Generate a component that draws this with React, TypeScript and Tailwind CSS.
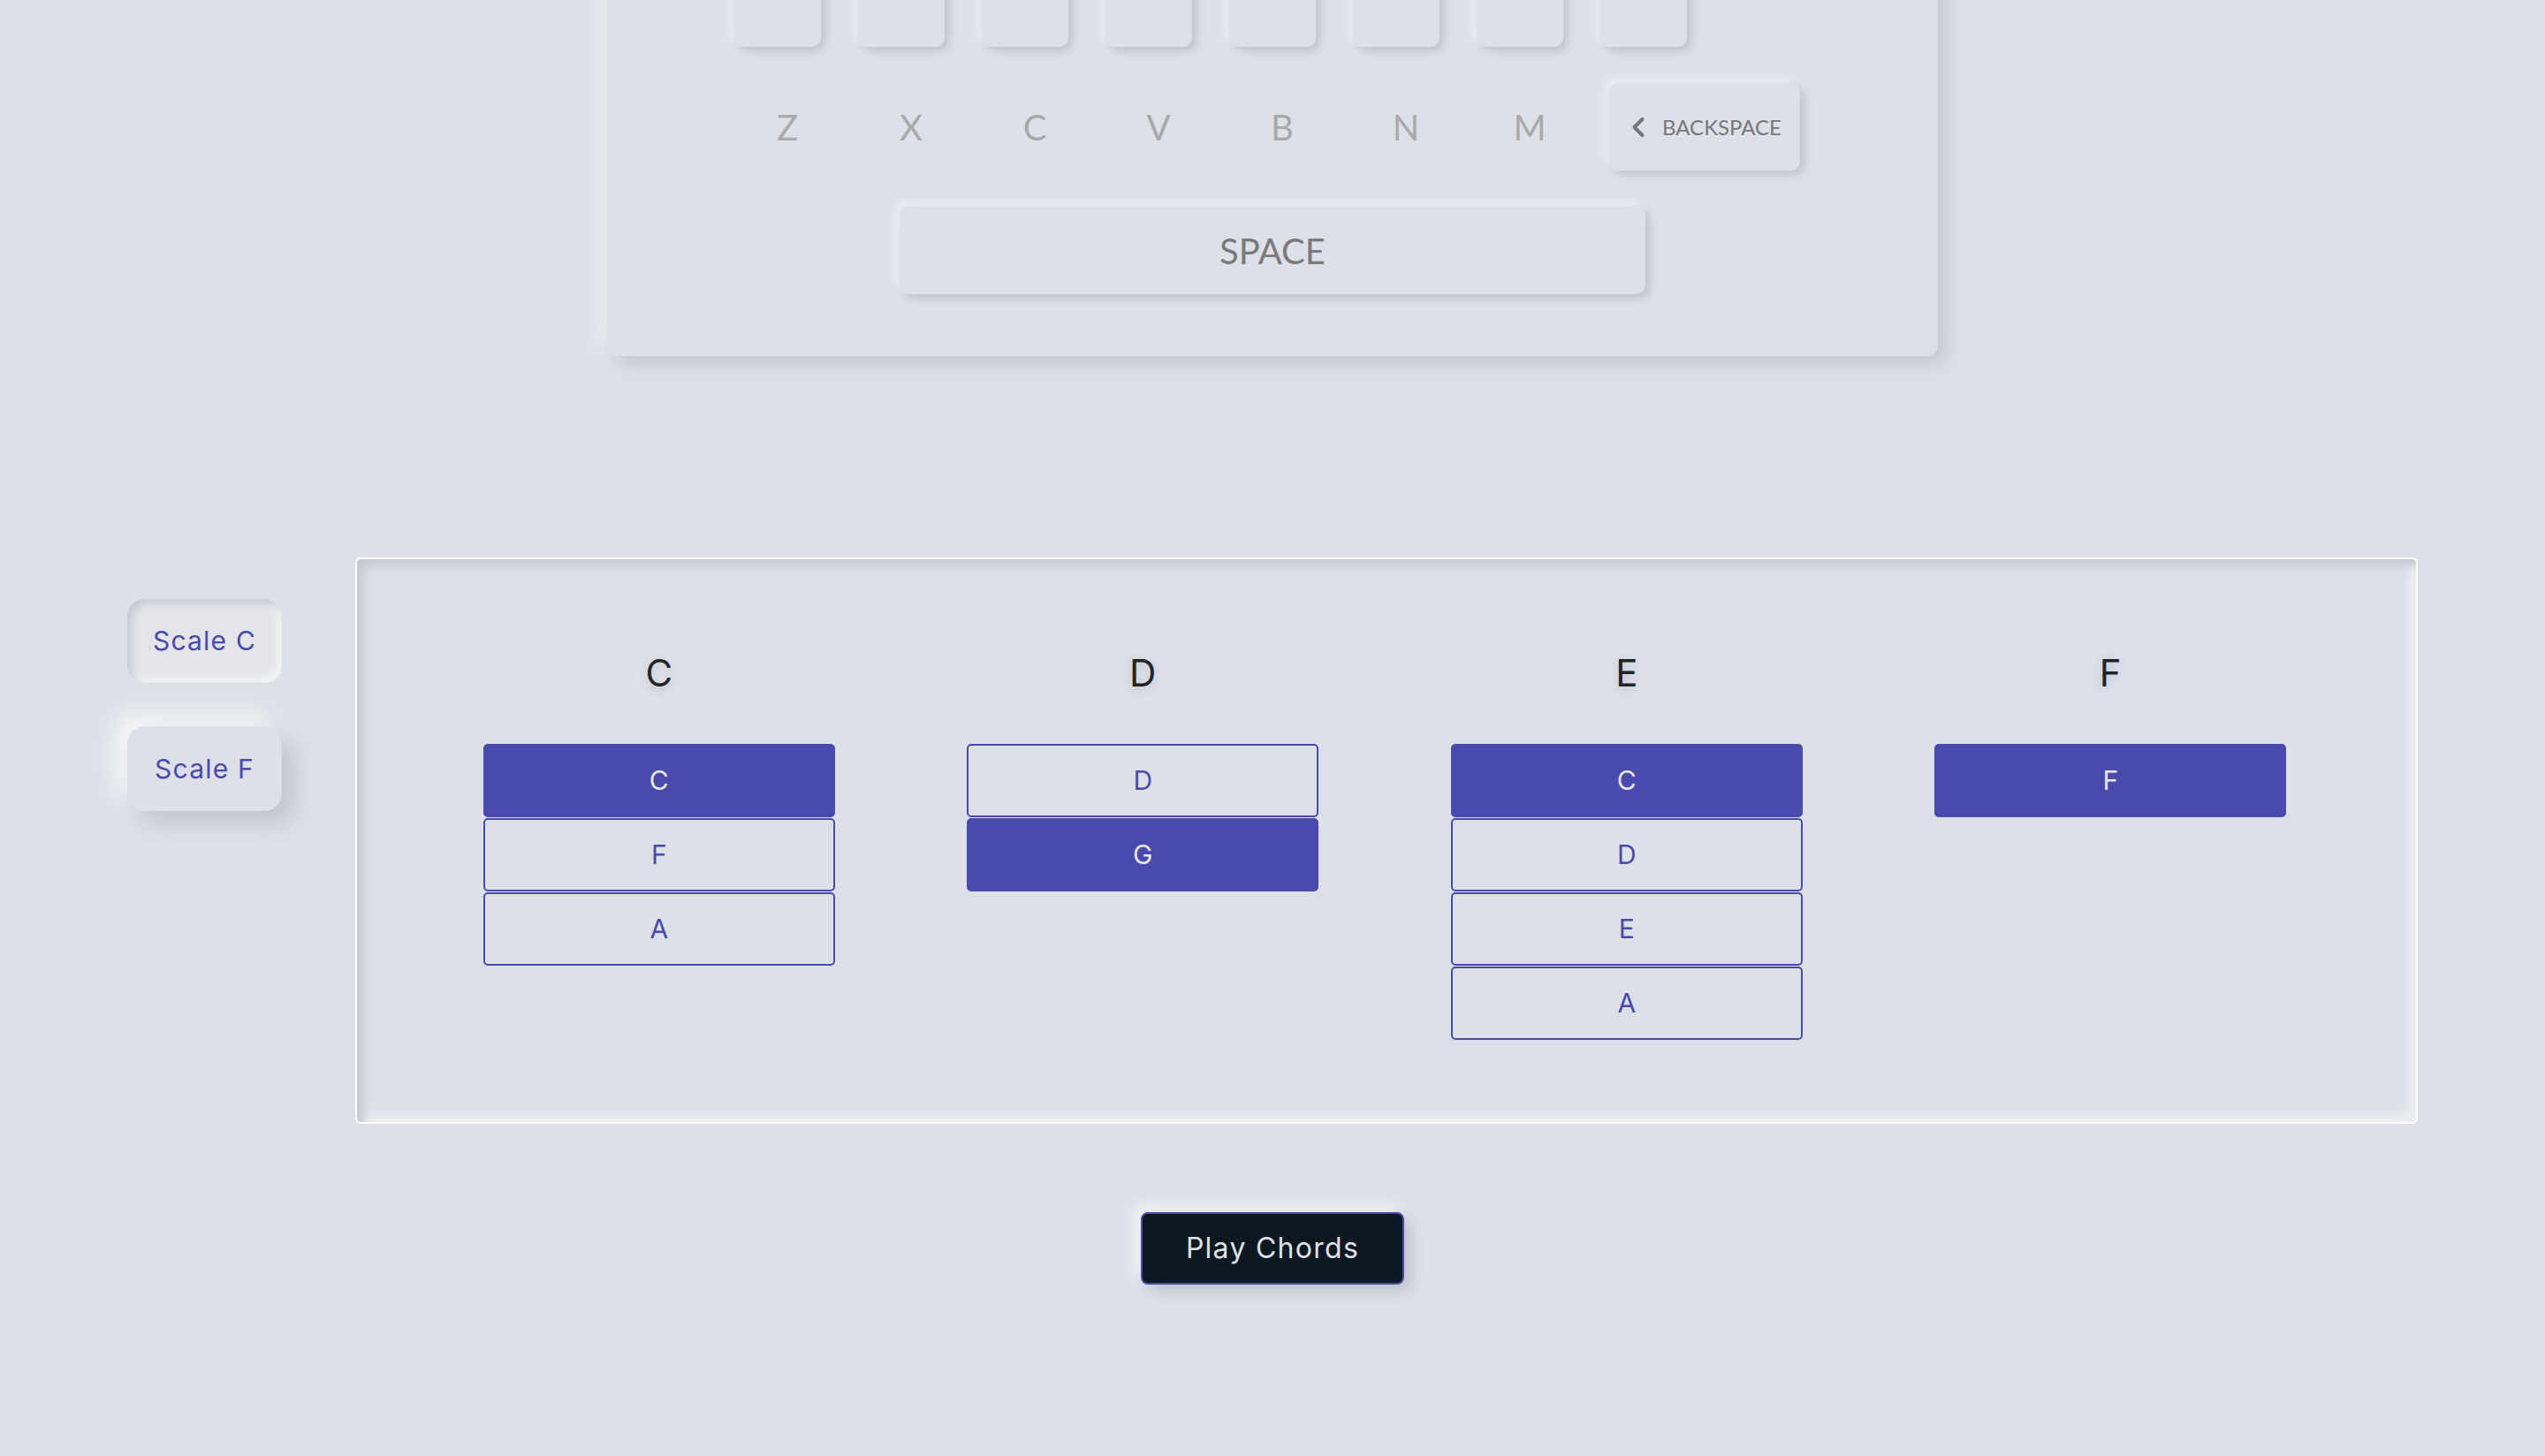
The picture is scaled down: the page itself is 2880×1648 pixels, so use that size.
import { ChevronLeft } from "lucide-react";

const topRow = ["A", "S", "D", "F", "G", "H", "J", "K"];
const bottomRow = ["Z", "X", "C", "V", "B", "N", "M"];

type Note = { n: string; on?: boolean };

const chords: { name: string; notes: Note[] }[] = [
	{ name: "C", notes: [{ n: "C", on: true }, { n: "F" }, { n: "A" }] },
	{ name: "D", notes: [{ n: "D" }, { n: "G", on: true }] },
	{ name: "E", notes: [{ n: "C", on: true }, { n: "D" }, { n: "E" }, { n: "A" }] },
	{ name: "F", notes: [{ n: "F", on: true }] },
];

const lato = "font-['Lato','Liberation_Sans',sans-serif]";
const sans = "font-['Inter','Noto_Sans',sans-serif]";

function cx(...parts: string[]) {
	return parts.join(" ");
}

function Keyboard() {
	return (
		<div className="mx-auto -mt-[46px] w-[1506px] rounded-[12px] bg-[#dde0e7] pb-[70px] shadow-[10px_10px_20px_#c3c8d2,-10px_-10px_20px_#eceef2]">
			{/* home row, mostly above the fold */}
			<div className="flex gap-[42px] pl-[144px]">
				{topRow.map((k) => (
					<div
						key={k}
						className="h-[99px] w-[98px] rounded-[10px] bg-[#dde0e7] shadow-[5px_5px_10px_#bfc4ce,-5px_-5px_10px_#eceef2]"
					/>
				))}
			</div>
			<div className="mt-[41px] flex gap-[42px] pl-[155px]">
				{bottomRow.map((k) => (
					<div
						key={k}
						className={cx(
							"flex h-[99px] w-[98px] items-center justify-center text-[40px] text-[#a9a9ab]",
							lato,
						)}
					>
						{k}
					</div>
				))}
				<div
					className={cx(
						"-ml-[1px] flex h-[99px] w-[216px] items-center justify-center gap-[9px] rounded-[10px] bg-[#dde0e7] text-[24px] text-[#777779] shadow-[5px_5px_10px_#bfc4ce,-5px_-5px_10px_#eceef2]",
						lato,
					)}
				>
					<ChevronLeft size={36} strokeWidth={2.7} className="-ml-[6px]" />
					<span>BACKSPACE</span>
				</div>
			</div>
			<div className="mt-[40px] flex justify-center">
				<div
					className={cx(
						"flex h-[100px] w-[844px] items-center justify-center rounded-[10px] bg-[#dde0e7] pt-[2px] text-[40px] text-[#7a7a7c] shadow-[5px_5px_10px_#bfc4ce,-5px_-5px_10px_#eceef2]",
						lato,
					)}
				>
					SPACE
				</div>
			</div>
		</div>
	);
}

function ChordPanel() {
	return (
		<div className="grid flex-1 grid-cols-4 rounded-[6px] border-2 border-white bg-[#dde0e7] pt-[97px] pr-[72px] pb-[93px] pl-[68px] shadow-[inset_7px_7px_12px_#c2c7d1,inset_-7px_-7px_12px_#f1f2f5]">
			{chords.map((c) => (
				<div key={c.name} className="flex flex-col items-center">
					<div
						className={cx(
							"h-[64px] text-[42px] leading-[64px] text-[#232325] [text-shadow:0_3px_10px_rgba(160,168,184,0.55)]",
							sans,
						)}
					>
						{c.name}
					</div>
					<div className="mt-[48px] flex flex-col gap-[1px]">
						{c.notes.map((note, i) => (
							<div
								key={i}
								className={cx(
									"flex h-[83px] w-[398px] items-center justify-center rounded-[5px] border-2 border-[#4a49ad] text-[30px]",
									note.on ? "bg-[#4a49ad] text-[#e6e7ef]" : "text-[#4a49ad]",
									sans,
								)}
							>
								{note.n}
							</div>
						))}
					</div>
				</div>
			))}
		</div>
	);
}

export default function App() {
	return (
		<div className="h-[1648px] w-full overflow-hidden bg-[#dde0e7]">
			<Keyboard />
			<div className="mt-[228px] flex items-start gap-[83px] px-[144px]">
				<div className="flex flex-col gap-[49px] pt-[47px]">
					<div
						className={cx(
							"flex h-[95px] w-[175px] items-center justify-center rounded-[20px] bg-[#e3e5ea] text-[30px] tracking-[0.04em] text-[#4a49ad] shadow-[inset_5px_5px_9px_#c6cad3,inset_-5px_-5px_9px_#f4f5f8]",
							sans,
						)}
					>
						Scale C
					</div>
					<div
						className={cx(
							"flex h-[96px] w-[175px] items-center justify-center rounded-[20px] bg-[#dde0e7] text-[30px] tracking-[0.04em] text-[#4a49ad] shadow-[14px_14px_26px_#c0c5cf,-14px_-14px_26px_#f6f7f9]",
							sans,
						)}
					>
						Scale F
					</div>
				</div>
				<ChordPanel />
			</div>
			<div className="mt-[100px] flex justify-center">
				<button
					className={cx(
						"flex h-[82px] w-[298px] items-center justify-center rounded-[8px] border-2 border-[#4a49ad] bg-[#0d1820] text-[32px] tracking-[0.04em] text-[#dfe2ea] shadow-[8px_8px_16px_#bfc4ce,-8px_-8px_16px_#f3f4f7]",
						sans,
					)}
				>
					Play Chords
				</button>
			</div>
		</div>
	);
}
